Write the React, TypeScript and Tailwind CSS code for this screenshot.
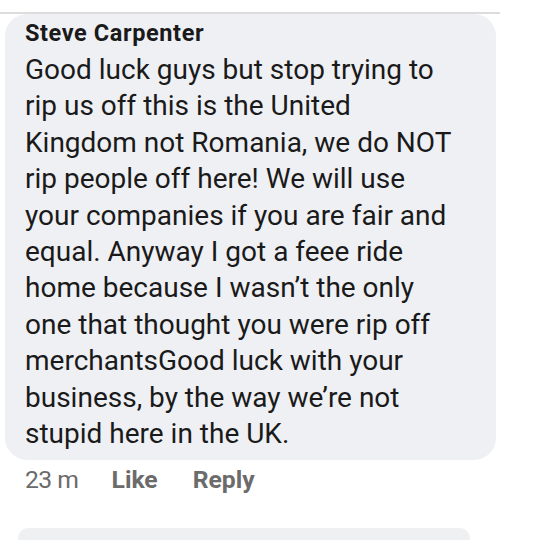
export default function App() {
  const lines = [
    "Good luck guys but stop trying to",
    "rip us off this is the United",
    "Kingdom not Romania, we do NOT",
    "rip people off here! We will use",
    "your companies if you are fair and",
    "equal. Anyway I got a feee ride",
    "home because I wasn’t the only",
    "one that thought you were rip off",
    "merchantsGood luck with your",
    "business, by the way we’re not",
    "stupid here in the UK.",
  ];
  return (
    <div className="w-[540px] h-[540px] bg-white overflow-hidden flex flex-col" style={{ fontFamily: "Roboto, 'Liberation Sans', sans-serif" }}>
      <div className="h-[12px] shrink-0" />
      <div className="h-[2px] w-[500px] bg-[#dcdcdc] shrink-0" />
      <div className="ml-[5px] w-[491px] bg-[#eff0f4] rounded-[22px] pl-[20px] pt-[1px] pb-[8px] shrink-0">
        <div className="text-[23.5px] font-bold text-[#1a1a1a] leading-[36px] tracking-[0.6px]">Steve Carpenter</div>
        <div className="mt-[1px] text-[28px] text-[#1a1a1a] leading-[36.4px] whitespace-nowrap">
          {lines.map((l, i) => (
            <div key={i}>{l}</div>
          ))}
        </div>
      </div>
      <div className="flex items-center pl-[25px] h-[38px] text-[24.7px] text-[#6b6b6b] shrink-0">
        <span className="tracking-[-0.5px]">23 m</span>
        <span className="font-bold ml-[33px]">Like</span>
        <span className="font-bold ml-[35px]">Reply</span>
      </div>
      <div className="mt-[30px] ml-[18px] w-[452px] h-[12px] bg-[#eff0f2] rounded-t-[10px] shrink-0" />
    </div>
  );
}
